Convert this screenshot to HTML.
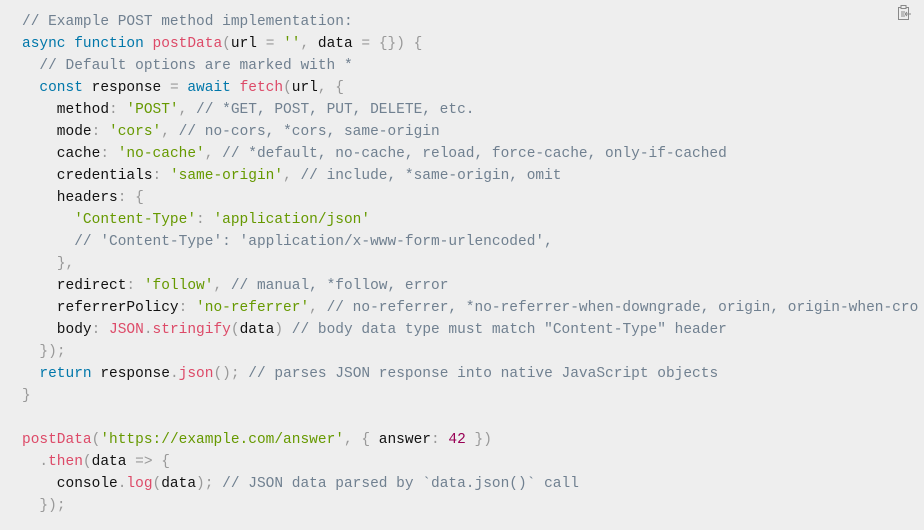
<!DOCTYPE html>
<html><head><meta charset="utf-8"><style>
html,body{margin:0;padding:0;background:#eeeeee;width:924px;height:530px;overflow:hidden}
pre{margin:0;padding:11px 0 0 22px;font-family:"Liberation Mono",monospace;font-size:14.5px;line-height:22px;color:#111;white-space:pre;overflow:hidden;width:902px}
.c{color:#708090}.k{color:#0077aa}.f{color:#dd4a68}.s{color:#669900}.p{color:#999}.n{color:#990055}
.icon{position:absolute;left:897px;top:4px}
</style></head><body>
<svg class="icon" width="16" height="18" viewBox="0 0 16 18"><rect x="1.5" y="3.5" width="10" height="12" fill="none" stroke="#888"/><rect x="4" y="1.5" width="5" height="3" fill="#eee" stroke="#888"/><path d="M4 8h4M4 10h3M4 12h4" stroke="#888"/><path d="M8 10h6M10 8l-2 2 2 2" stroke="#888" fill="none"/></svg>
<pre><span class="c">// Example POST method implementation:</span>
<span class="k">async</span> <span class="k">function</span> <span class="f">postData</span><span class="p">(</span>url <span class="p">=</span> <span class="s">''</span><span class="p">,</span> data <span class="p">=</span> <span class="p">{</span><span class="p">}</span><span class="p">)</span> <span class="p">{</span>
  <span class="c">// Default options are marked with *</span>
  <span class="k">const</span> response <span class="p">=</span> <span class="k">await</span> <span class="f">fetch</span><span class="p">(</span>url<span class="p">,</span> <span class="p">{</span>
    method<span class="p">:</span> <span class="s">'POST'</span><span class="p">,</span> <span class="c">// *GET, POST, PUT, DELETE, etc.</span>
    mode<span class="p">:</span> <span class="s">'cors'</span><span class="p">,</span> <span class="c">// no-cors, *cors, same-origin</span>
    cache<span class="p">:</span> <span class="s">'no-cache'</span><span class="p">,</span> <span class="c">// *default, no-cache, reload, force-cache, only-if-cached</span>
    credentials<span class="p">:</span> <span class="s">'same-origin'</span><span class="p">,</span> <span class="c">// include, *same-origin, omit</span>
    headers<span class="p">:</span> <span class="p">{</span>
      <span class="s">'Content-Type'</span><span class="p">:</span> <span class="s">'application/json'</span>
      <span class="c">// 'Content-Type': 'application/x-www-form-urlencoded',</span>
    <span class="p">}</span><span class="p">,</span>
    redirect<span class="p">:</span> <span class="s">'follow'</span><span class="p">,</span> <span class="c">// manual, *follow, error</span>
    referrerPolicy<span class="p">:</span> <span class="s">'no-referrer'</span><span class="p">,</span> <span class="c">// no-referrer, *no-referrer-when-downgrade, origin, origin-when-cro</span>
    body<span class="p">:</span> <span class="f">JSON</span><span class="p">.</span><span class="f">stringify</span><span class="p">(</span>data<span class="p">)</span> <span class="c">// body data type must match "Content-Type" header</span>
  <span class="p">}</span><span class="p">)</span><span class="p">;</span>
  <span class="k">return</span> response<span class="p">.</span><span class="f">json</span><span class="p">(</span><span class="p">)</span><span class="p">;</span> <span class="c">// parses JSON response into native JavaScript objects</span>
<span class="p">}</span>

<span class="f">postData</span><span class="p">(</span><span class="s">'https://example.com/answer'</span><span class="p">,</span> <span class="p">{</span> answer<span class="p">:</span> <span class="n">42</span> <span class="p">}</span><span class="p">)</span>
  <span class="p">.</span><span class="f">then</span><span class="p">(</span>data <span class="p">=&gt;</span> <span class="p">{</span>
    console<span class="p">.</span><span class="f">log</span><span class="p">(</span>data<span class="p">)</span><span class="p">;</span> <span class="c">// JSON data parsed by `data.json()` call</span>
  <span class="p">}</span><span class="p">)</span><span class="p">;</span></pre>
</body></html>
